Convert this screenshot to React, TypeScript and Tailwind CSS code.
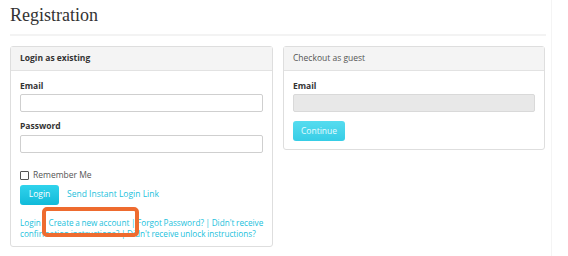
const sans = { fontFamily: '"Open Sans", "Liberation Sans", sans-serif' };

function Field({ label, disabled }: { label: string; disabled?: boolean }) {
  return (
    <div>
      <div className="h-[12px] text-[8.5px] font-bold leading-[12px] text-[#333]">{label}</div>
      <div
        className={
          'mt-[2px] h-[18px] w-full rounded-[2px] border ' +
          (disabled ? 'border-[#d9d9d9] bg-[#e8e8e8]' : 'border-[#cfcfcf] bg-white')
        }
      />
    </div>
  );
}

function Panel({ title, bold, children }: { title: string; bold?: boolean; children: React.ReactNode }) {
  return (
    <div className="w-[263px] self-start rounded-[3px] border border-[#dedede] bg-white">
      <div
        className={
          'flex h-[24px] items-center border-b border-[#e2e2e2] bg-[#f4f4f4] px-[9px] text-[8.5px] ' +
          (bold ? 'font-bold text-[#333]' : 'text-[#555]')
        }
      >
        {title}
      </div>
      <div className="px-[9px]">{children}</div>
    </div>
  );
}

export default function App() {
  const link = 'text-[#22bfdc]';
  return (
    <div className="relative h-[256px] w-[568px] overflow-hidden bg-white" style={sans}>
      <div className="h-full w-[552px] border-r border-[#f4f4f4] pl-[10px] pr-[6px]">
        <h1
          className="h-[27px] pt-[3px] text-[18px] leading-[24px] text-[#333]"
          style={{ fontFamily: '"Liberation Serif", "DejaVu Serif", serif' }}
        >
          Registration
        </h1>
        <div className="mt-[7px] h-[2px] w-[536px] bg-[#f3f3f3]" />

        <div className="mt-[10px] flex gap-[10px]">
          <Panel title="Login as existing" bold>
            <div className="pt-[9px]">
              <Field label="Email" />
            </div>
            <div className="mt-[8px]">
              <div className="h-[12px] text-[8.5px] font-bold leading-[12px] text-[#333]">Password</div>
              <div className="mt-[3px] h-[18px] w-full rounded-[2px] border border-[#cfcfcf] bg-white" />
            </div>
            <label className="mt-[16px] flex items-center gap-[4px] text-[8.5px] text-[#555]">
              <span className="h-[9px] w-[9px] rounded-[1px] border border-[#555] bg-white" />
              Remember Me
            </label>
            <div className="mt-[3px] flex items-center gap-[8px] text-[8.5px]">
              <button className="h-[20px] w-[39px] rounded-[3px] bg-gradient-to-b from-[#2fd3ec] to-[#0fbad9] text-white">
                Login
              </button>
              <span className={link}>Send Instant Login Link</span>
            </div>
            <p
              className={'mt-[12px] whitespace-nowrap pb-[7px] text-[8.2px] leading-[11px] ' + link}
              style={{ wordSpacing: '-0.5px' }}
            >
              Login | Create a new account | Forgot Password? | Didn't receive
              <br />
              confirmation instructions? | Didn't receive unlock instructions?
            </p>
          </Panel>

          <Panel title="Checkout as guest">
            <div className="pt-[9px]">
              <Field label="Email" disabled />
            </div>
            <button className="mt-[9px] mb-[8px] h-[20px] w-[52px] rounded-[3px] bg-gradient-to-b from-[#55dcef] to-[#36cde6] text-[8.5px] text-[#e6fbff]">
              Continue
            </button>
          </Panel>
        </div>
      </div>

      <div className="absolute left-[42px] top-[207px] h-[30px] w-[97px] rounded-[5px] border-[4px] border-[#ee6b2f]" />
    </div>
  );
}
